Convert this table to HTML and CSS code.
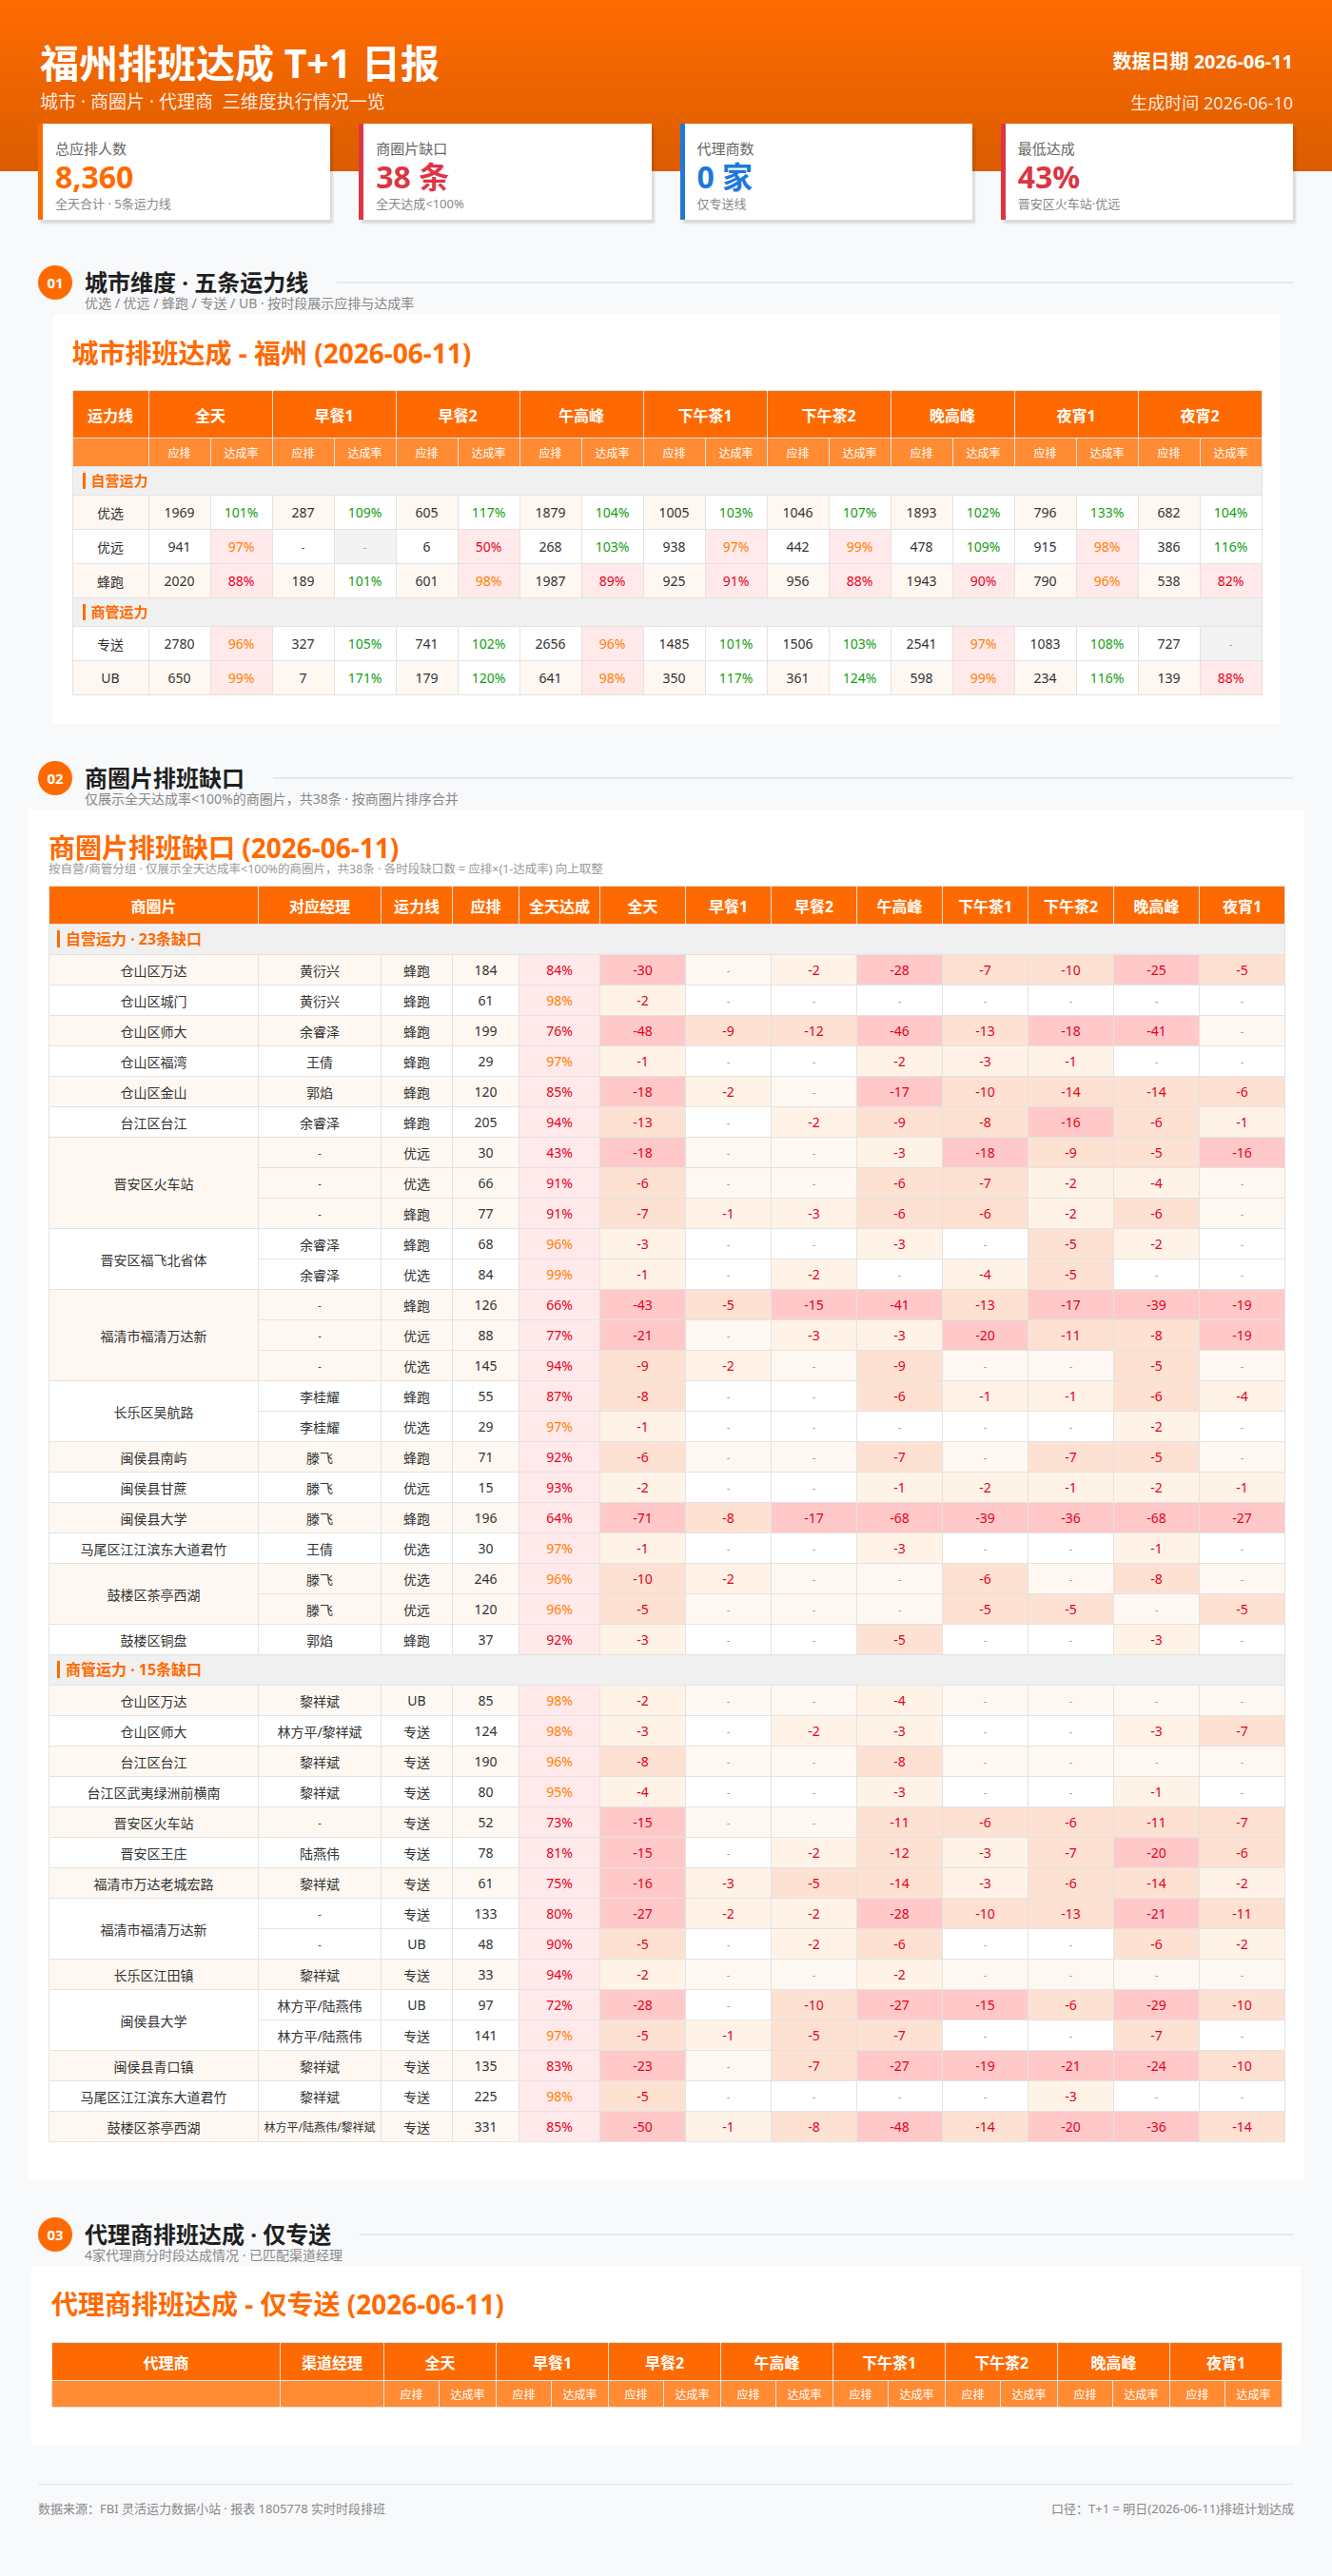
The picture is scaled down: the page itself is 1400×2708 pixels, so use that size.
FILE: index.html
```html
<!DOCTYPE html>
<html lang="zh-CN">
<head>
<meta charset="utf-8">
<title>福州排班达成 T+1 日报</title>
<link rel="stylesheet" href="styles.css">
</head>
<body>
<header class="hero">
  <div class="hero-left">
    <h1>福州排班达成 T+1 日报</h1>
    <div class="hero-sub">城市 · 商圈片 · 代理商&nbsp; 三维度执行情况一览</div>
  </div>
  <div class="hero-right">
    <div class="hero-date">数据日期 2026-06-11</div>
    <div class="hero-gen">生成时间 2026-06-10</div>
  </div>
</header>

<section class="kpis">
  <div class="kpi kpi-orange">
    <div class="kpi-label">总应排人数</div>
    <div class="kpi-value">8,360</div>
    <div class="kpi-sub">全天合计 · 5条运力线</div>
  </div>
  <div class="kpi kpi-red">
    <div class="kpi-label">商圈片缺口</div>
    <div class="kpi-value">38 条</div>
    <div class="kpi-sub">全天达成&lt;100%</div>
  </div>
  <div class="kpi kpi-blue">
    <div class="kpi-label">代理商数</div>
    <div class="kpi-value">0 家</div>
    <div class="kpi-sub">仅专送线</div>
  </div>
  <div class="kpi kpi-red">
    <div class="kpi-label">最低达成</div>
    <div class="kpi-value">43%</div>
    <div class="kpi-sub">晋安区火车站·优远</div>
  </div>
</section>

<div class="sec-head sec-1">
  <span class="num">01</span>
  <h3 class="sec-title">城市维度 · 五条运力线</h3>
  <span class="sec-line"></span>
</div>
<div class="sec-sub">优选 / 优远 / 蜂跑 / 专送 / UB · 按时段展示应排与达成率</div>

<div class="panel p1">
  <h2>城市排班达成 - 福州 (2026-06-11)</h2>
  <table class="t1">
    <colgroup><col class="c-line"><col span="18" class="c-n"></colgroup>
    <thead>
      <tr class="h1"><th>运力线</th><th colspan="2">全天</th><th colspan="2">早餐1</th><th colspan="2">早餐2</th><th colspan="2">午高峰</th><th colspan="2">下午茶1</th><th colspan="2">下午茶2</th><th colspan="2">晚高峰</th><th colspan="2">夜宵1</th><th colspan="2">夜宵2</th></tr>
      <tr class="h2"><th></th><th>应排</th><th>达成率</th><th>应排</th><th>达成率</th><th>应排</th><th>达成率</th><th>应排</th><th>达成率</th><th>应排</th><th>达成率</th><th>应排</th><th>达成率</th><th>应排</th><th>达成率</th><th>应排</th><th>达成率</th><th>应排</th><th>达成率</th></tr>
    </thead>
    <tbody>
      <tr class="grp"><td colspan="19"><span class="grp-label">自营运力</span></td></tr>
      <tr class="z"><td>优选</td><td>1969</td><td class="ok">101%</td><td>287</td><td class="ok">109%</td><td>605</td><td class="ok">117%</td><td>1879</td><td class="ok">104%</td><td>1005</td><td class="ok">103%</td><td>1046</td><td class="ok">107%</td><td>1893</td><td class="ok">102%</td><td>796</td><td class="ok">133%</td><td>682</td><td class="ok">104%</td></tr>
      <tr><td>优远</td><td>941</td><td class="warn">97%</td><td class="d">-</td><td class="na">-</td><td>6</td><td class="bad">50%</td><td>268</td><td class="ok">103%</td><td>938</td><td class="warn">97%</td><td>442</td><td class="warn">99%</td><td>478</td><td class="ok">109%</td><td>915</td><td class="warn">98%</td><td>386</td><td class="ok">116%</td></tr>
      <tr class="z"><td>蜂跑</td><td>2020</td><td class="bad">88%</td><td>189</td><td class="ok">101%</td><td>601</td><td class="warn">98%</td><td>1987</td><td class="bad">89%</td><td>925</td><td class="bad">91%</td><td>956</td><td class="bad">88%</td><td>1943</td><td class="bad">90%</td><td>790</td><td class="warn">96%</td><td>538</td><td class="bad">82%</td></tr>
      <tr class="grp"><td colspan="19"><span class="grp-label">商管运力</span></td></tr>
      <tr><td>专送</td><td>2780</td><td class="warn">96%</td><td>327</td><td class="ok">105%</td><td>741</td><td class="ok">102%</td><td>2656</td><td class="warn">96%</td><td>1485</td><td class="ok">101%</td><td>1506</td><td class="ok">103%</td><td>2541</td><td class="warn">97%</td><td>1083</td><td class="ok">108%</td><td>727</td><td class="na">-</td></tr>
      <tr class="z"><td>UB</td><td>650</td><td class="warn">99%</td><td>7</td><td class="ok">171%</td><td>179</td><td class="ok">120%</td><td>641</td><td class="warn">98%</td><td>350</td><td class="ok">117%</td><td>361</td><td class="ok">124%</td><td>598</td><td class="warn">99%</td><td>234</td><td class="ok">116%</td><td>139</td><td class="bad">88%</td></tr>
    </tbody>
  </table>
</div>

<div class="sec-head sec-2">
  <span class="num">02</span>
  <h3 class="sec-title">商圈片排班缺口</h3>
  <span class="sec-line"></span>
</div>
<div class="sec-sub">仅展示全天达成率&lt;100%的商圈片，共38条 · 按商圈片排序合并</div>

<div class="panel p2">
  <h2>商圈片排班缺口 (2026-06-11)</h2>
  <div class="panel-note">按自营/商管分组 · 仅展示全天达成率&lt;100%的商圈片，共38条 · 各时段缺口数 = 应排×(1-达成率) 向上取整</div>
  <table class="t2">
    <colgroup><col class="c-area"><col class="c-mgr"><col class="c-ln"><col class="c-plan"><col class="c-rate"><col span="8" class="c-gap"></colgroup>
    <thead>
      <tr><th>商圈片</th><th>对应经理</th><th>运力线</th><th>应排</th><th>全天达成</th><th>全天</th><th>早餐1</th><th>早餐2</th><th>午高峰</th><th>下午茶1</th><th>下午茶2</th><th>晚高峰</th><th>夜宵1</th></tr>
    </thead>
    <tbody>
      <tr class="grp"><td colspan="13"><span class="grp-label">自营运力 · 23条缺口</span></td></tr>
      <tr class="z"><td>仓山区万达</td><td>黄衍兴</td><td>蜂跑</td><td>184</td><td class="r bad">84%</td><td class="g3">-30</td><td class="e">-</td><td class="g1">-2</td><td class="g3">-28</td><td class="g2">-7</td><td class="g2">-10</td><td class="g3">-25</td><td class="g2">-5</td></tr>
      <tr><td>仓山区城门</td><td>黄衍兴</td><td>蜂跑</td><td>61</td><td class="r warn">98%</td><td class="g1">-2</td><td class="e">-</td><td class="e">-</td><td class="e">-</td><td class="e">-</td><td class="e">-</td><td class="e">-</td><td class="e">-</td></tr>
      <tr class="z"><td>仓山区师大</td><td>余睿泽</td><td>蜂跑</td><td>199</td><td class="r bad">76%</td><td class="g3">-48</td><td class="g2">-9</td><td class="g2">-12</td><td class="g3">-46</td><td class="g2">-13</td><td class="g3">-18</td><td class="g3">-41</td><td class="e">-</td></tr>
      <tr><td>仓山区福湾</td><td>王倩</td><td>蜂跑</td><td>29</td><td class="r warn">97%</td><td class="g1">-1</td><td class="e">-</td><td class="e">-</td><td class="g1">-2</td><td class="g1">-3</td><td class="g1">-1</td><td class="e">-</td><td class="e">-</td></tr>
      <tr class="z"><td>仓山区金山</td><td>郭焰</td><td>蜂跑</td><td>120</td><td class="r bad">85%</td><td class="g3">-18</td><td class="g1">-2</td><td class="e">-</td><td class="g3">-17</td><td class="g2">-10</td><td class="g2">-14</td><td class="g2">-14</td><td class="g2">-6</td></tr>
      <tr><td>台江区台江</td><td>余睿泽</td><td>蜂跑</td><td>205</td><td class="r bad">94%</td><td class="g2">-13</td><td class="e">-</td><td class="g1">-2</td><td class="g2">-9</td><td class="g2">-8</td><td class="g3">-16</td><td class="g2">-6</td><td class="g1">-1</td></tr>
      <tr class="z"><td rowspan="3">晋安区火车站</td><td class="d">-</td><td>优远</td><td>30</td><td class="r bad">43%</td><td class="g3">-18</td><td class="e">-</td><td class="e">-</td><td class="g1">-3</td><td class="g3">-18</td><td class="g2">-9</td><td class="g2">-5</td><td class="g3">-16</td></tr>
      <tr class="z"><td class="d">-</td><td>优选</td><td>66</td><td class="r bad">91%</td><td class="g2">-6</td><td class="e">-</td><td class="e">-</td><td class="g2">-6</td><td class="g2">-7</td><td class="g1">-2</td><td class="g1">-4</td><td class="e">-</td></tr>
      <tr class="z"><td class="d">-</td><td>蜂跑</td><td>77</td><td class="r bad">91%</td><td class="g2">-7</td><td class="g1">-1</td><td class="g1">-3</td><td class="g2">-6</td><td class="g2">-6</td><td class="g1">-2</td><td class="g2">-6</td><td class="e">-</td></tr>
      <tr><td rowspan="2">晋安区福飞北省体</td><td>余睿泽</td><td>蜂跑</td><td>68</td><td class="r warn">96%</td><td class="g1">-3</td><td class="e">-</td><td class="e">-</td><td class="g1">-3</td><td class="e">-</td><td class="g2">-5</td><td class="g1">-2</td><td class="e">-</td></tr>
      <tr><td>余睿泽</td><td>优选</td><td>84</td><td class="r warn">99%</td><td class="g1">-1</td><td class="e">-</td><td class="g1">-2</td><td class="e">-</td><td class="g1">-4</td><td class="g2">-5</td><td class="e">-</td><td class="e">-</td></tr>
      <tr class="z"><td rowspan="3">福清市福清万达新</td><td class="d">-</td><td>蜂跑</td><td>126</td><td class="r bad">66%</td><td class="g3">-43</td><td class="g2">-5</td><td class="g3">-15</td><td class="g3">-41</td><td class="g2">-13</td><td class="g3">-17</td><td class="g3">-39</td><td class="g3">-19</td></tr>
      <tr class="z"><td class="d">-</td><td>优远</td><td>88</td><td class="r bad">77%</td><td class="g3">-21</td><td class="e">-</td><td class="g1">-3</td><td class="g1">-3</td><td class="g3">-20</td><td class="g2">-11</td><td class="g2">-8</td><td class="g3">-19</td></tr>
      <tr class="z"><td class="d">-</td><td>优选</td><td>145</td><td class="r bad">94%</td><td class="g2">-9</td><td class="g1">-2</td><td class="e">-</td><td class="g2">-9</td><td class="e">-</td><td class="e">-</td><td class="g2">-5</td><td class="e">-</td></tr>
      <tr><td rowspan="2">长乐区吴航路</td><td>李桂耀</td><td>蜂跑</td><td>55</td><td class="r bad">87%</td><td class="g2">-8</td><td class="e">-</td><td class="e">-</td><td class="g2">-6</td><td class="g1">-1</td><td class="g1">-1</td><td class="g2">-6</td><td class="g1">-4</td></tr>
      <tr><td>李桂耀</td><td>优选</td><td>29</td><td class="r warn">97%</td><td class="g1">-1</td><td class="e">-</td><td class="e">-</td><td class="e">-</td><td class="e">-</td><td class="e">-</td><td class="g1">-2</td><td class="e">-</td></tr>
      <tr class="z"><td>闽侯县南屿</td><td>滕飞</td><td>蜂跑</td><td>71</td><td class="r bad">92%</td><td class="g2">-6</td><td class="e">-</td><td class="e">-</td><td class="g2">-7</td><td class="e">-</td><td class="g2">-7</td><td class="g2">-5</td><td class="e">-</td></tr>
      <tr><td>闽侯县甘蔗</td><td>滕飞</td><td>优远</td><td>15</td><td class="r bad">93%</td><td class="g1">-2</td><td class="e">-</td><td class="e">-</td><td class="g1">-1</td><td class="g1">-2</td><td class="g1">-1</td><td class="g1">-2</td><td class="g1">-1</td></tr>
      <tr class="z"><td>闽侯县大学</td><td>滕飞</td><td>蜂跑</td><td>196</td><td class="r bad">64%</td><td class="g3">-71</td><td class="g2">-8</td><td class="g3">-17</td><td class="g3">-68</td><td class="g3">-39</td><td class="g3">-36</td><td class="g3">-68</td><td class="g3">-27</td></tr>
      <tr><td>马尾区江江滨东大道君竹</td><td>王倩</td><td>优选</td><td>30</td><td class="r warn">97%</td><td class="g1">-1</td><td class="e">-</td><td class="e">-</td><td class="g1">-3</td><td class="e">-</td><td class="e">-</td><td class="g1">-1</td><td class="e">-</td></tr>
      <tr class="z"><td rowspan="2">鼓楼区茶亭西湖</td><td>滕飞</td><td>优选</td><td>246</td><td class="r warn">96%</td><td class="g2">-10</td><td class="g1">-2</td><td class="e">-</td><td class="e">-</td><td class="g2">-6</td><td class="e">-</td><td class="g2">-8</td><td class="e">-</td></tr>
      <tr class="z"><td>滕飞</td><td>优远</td><td>120</td><td class="r warn">96%</td><td class="g2">-5</td><td class="e">-</td><td class="e">-</td><td class="e">-</td><td class="g2">-5</td><td class="g2">-5</td><td class="e">-</td><td class="g2">-5</td></tr>
      <tr><td>鼓楼区铜盘</td><td>郭焰</td><td>蜂跑</td><td>37</td><td class="r bad">92%</td><td class="g1">-3</td><td class="e">-</td><td class="e">-</td><td class="g2">-5</td><td class="e">-</td><td class="e">-</td><td class="g1">-3</td><td class="e">-</td></tr>

      <tr class="grp"><td colspan="13"><span class="grp-label">商管运力 · 15条缺口</span></td></tr>
      <tr class="z"><td>仓山区万达</td><td>黎祥斌</td><td>UB</td><td>85</td><td class="r warn">98%</td><td class="g1">-2</td><td class="e">-</td><td class="e">-</td><td class="g1">-4</td><td class="e">-</td><td class="e">-</td><td class="e">-</td><td class="e">-</td></tr>
      <tr><td>仓山区师大</td><td>林方平/黎祥斌</td><td>专送</td><td>124</td><td class="r warn">98%</td><td class="g1">-3</td><td class="e">-</td><td class="g1">-2</td><td class="g1">-3</td><td class="e">-</td><td class="e">-</td><td class="g1">-3</td><td class="g2">-7</td></tr>
      <tr class="z"><td>台江区台江</td><td>黎祥斌</td><td>专送</td><td>190</td><td class="r warn">96%</td><td class="g2">-8</td><td class="e">-</td><td class="e">-</td><td class="g2">-8</td><td class="e">-</td><td class="e">-</td><td class="e">-</td><td class="e">-</td></tr>
      <tr><td>台江区武夷绿洲前横南</td><td>黎祥斌</td><td>专送</td><td>80</td><td class="r warn">95%</td><td class="g1">-4</td><td class="e">-</td><td class="e">-</td><td class="g1">-3</td><td class="e">-</td><td class="e">-</td><td class="g1">-1</td><td class="e">-</td></tr>
      <tr class="z"><td>晋安区火车站</td><td class="d">-</td><td>专送</td><td>52</td><td class="r bad">73%</td><td class="g3">-15</td><td class="e">-</td><td class="e">-</td><td class="g2">-11</td><td class="g2">-6</td><td class="g2">-6</td><td class="g2">-11</td><td class="g2">-7</td></tr>
      <tr><td>晋安区王庄</td><td>陆燕伟</td><td>专送</td><td>78</td><td class="r bad">81%</td><td class="g3">-15</td><td class="e">-</td><td class="g1">-2</td><td class="g2">-12</td><td class="g1">-3</td><td class="g2">-7</td><td class="g3">-20</td><td class="g2">-6</td></tr>
      <tr class="z"><td>福清市万达老城宏路</td><td>黎祥斌</td><td>专送</td><td>61</td><td class="r bad">75%</td><td class="g3">-16</td><td class="g1">-3</td><td class="g2">-5</td><td class="g2">-14</td><td class="g1">-3</td><td class="g2">-6</td><td class="g2">-14</td><td class="g1">-2</td></tr>
      <tr><td rowspan="2">福清市福清万达新</td><td class="d">-</td><td>专送</td><td>133</td><td class="r bad">80%</td><td class="g3">-27</td><td class="g1">-2</td><td class="g1">-2</td><td class="g3">-28</td><td class="g2">-10</td><td class="g2">-13</td><td class="g3">-21</td><td class="g2">-11</td></tr>
      <tr><td class="d">-</td><td>UB</td><td>48</td><td class="r bad">90%</td><td class="g2">-5</td><td class="e">-</td><td class="g1">-2</td><td class="g2">-6</td><td class="e">-</td><td class="e">-</td><td class="g2">-6</td><td class="g1">-2</td></tr>
      <tr class="z"><td>长乐区江田镇</td><td>黎祥斌</td><td>专送</td><td>33</td><td class="r bad">94%</td><td class="g1">-2</td><td class="e">-</td><td class="e">-</td><td class="g1">-2</td><td class="e">-</td><td class="e">-</td><td class="e">-</td><td class="e">-</td></tr>
      <tr><td rowspan="2">闽侯县大学</td><td>林方平/陆燕伟</td><td>UB</td><td>97</td><td class="r bad">72%</td><td class="g3">-28</td><td class="e">-</td><td class="g2">-10</td><td class="g3">-27</td><td class="g3">-15</td><td class="g2">-6</td><td class="g3">-29</td><td class="g2">-10</td></tr>
      <tr><td>林方平/陆燕伟</td><td>专送</td><td>141</td><td class="r warn">97%</td><td class="g2">-5</td><td class="g1">-1</td><td class="g2">-5</td><td class="g2">-7</td><td class="e">-</td><td class="e">-</td><td class="g2">-7</td><td class="e">-</td></tr>
      <tr class="z"><td>闽侯县青口镇</td><td>黎祥斌</td><td>专送</td><td>135</td><td class="r bad">83%</td><td class="g3">-23</td><td class="e">-</td><td class="g2">-7</td><td class="g3">-27</td><td class="g3">-19</td><td class="g3">-21</td><td class="g3">-24</td><td class="g2">-10</td></tr>
      <tr><td>马尾区江江滨东大道君竹</td><td>黎祥斌</td><td>专送</td><td>225</td><td class="r warn">98%</td><td class="g2">-5</td><td class="e">-</td><td class="e">-</td><td class="e">-</td><td class="e">-</td><td class="g1">-3</td><td class="e">-</td><td class="e">-</td></tr>
      <tr class="z"><td>鼓楼区茶亭西湖</td><td class="small">林方平/陆燕伟/黎祥斌</td><td>专送</td><td>331</td><td class="r bad">85%</td><td class="g3">-50</td><td class="g1">-1</td><td class="g2">-8</td><td class="g3">-48</td><td class="g2">-14</td><td class="g3">-20</td><td class="g3">-36</td><td class="g2">-14</td></tr>
    </tbody>
  </table>
</div>

<div class="sec-head sec-3">
  <span class="num">03</span>
  <h3 class="sec-title">代理商排班达成 · 仅专送</h3>
  <span class="sec-line"></span>
</div>
<div class="sec-sub">4家代理商分时段达成情况 · 已匹配渠道经理</div>

<div class="panel p3">
  <h2>代理商排班达成 - 仅专送 (2026-06-11)</h2>
  <table class="t3">
    <colgroup><col class="c-agent"><col class="c-chan"><col class="c-a"><col class="c-b"><col class="c-a"><col class="c-b"><col class="c-a"><col class="c-b"><col class="c-a"><col class="c-b"><col class="c-a"><col class="c-b"><col class="c-a"><col class="c-b"><col class="c-a"><col class="c-b"><col class="c-a"><col class="c-b"></colgroup>
    <thead>
      <tr class="h1"><th>代理商</th><th>渠道经理</th><th colspan="2">全天</th><th colspan="2">早餐1</th><th colspan="2">早餐2</th><th colspan="2">午高峰</th><th colspan="2">下午茶1</th><th colspan="2">下午茶2</th><th colspan="2">晚高峰</th><th colspan="2">夜宵1</th></tr>
      <tr class="h2"><th></th><th></th><th>应排</th><th>达成率</th><th>应排</th><th>达成率</th><th>应排</th><th>达成率</th><th>应排</th><th>达成率</th><th>应排</th><th>达成率</th><th>应排</th><th>达成率</th><th>应排</th><th>达成率</th><th>应排</th><th>达成率</th></tr>
    </thead>
  </table>
</div>

<footer class="foot">
  <span>数据来源：FBI 灵活运力数据小站 · 报表 1805778 实时时段排班</span>
  <span>口径：T+1 = 明日(2026-06-11)排班计划达成</span>
</footer>
</body>
</html>
```

FILE: styles.css
```css
* { box-sizing: border-box; }

body {
  margin: 0;
  background: #f8f9fb;
  font-family: "Noto Sans", "Noto Sans CJK SC", sans-serif;
  color: #333;
}

/* ---------- hero ---------- */
.hero {
  height: 180px;
  padding: 42px 41px 0 42px;
  background: linear-gradient(180deg, #ff6b00 0%, #db5d00 100%);
  color: #fff;
  display: flex;
  justify-content: space-between;
}
.hero h1 {
  margin: 0;
  font-size: 41px;
  line-height: 48px;
  font-weight: 700;
}
.hero-sub {
  margin-top: 4px;
  font-size: 19px;
  line-height: 26px;
  color: rgba(255, 255, 255, 0.88);
}
.hero-right { text-align: right; }
.hero-date {
  margin-top: 9px;
  font-size: 20px;
  line-height: 28px;
  font-weight: 700;
}
.hero-gen {
  margin-top: 17px;
  font-size: 18px;
  line-height: 24px;
  color: rgba(255, 255, 255, 0.85);
}

/* ---------- kpis ---------- */
.kpis {
  display: grid;
  grid-template-columns: repeat(4, 1fr);
  gap: 30px;
  margin: -50px 41px 0 40px;
}
.kpi {
  height: 101px;
  background: #fff;
  border-left: 5px solid #ff6a00;
  padding: 16px 12px 8px 13px;
  box-shadow: 3px 4px 2px rgba(0, 0, 0, 0.12);
}
.kpi-label { font-size: 15px; line-height: 20px; color: #666; }
.kpi-value { margin-top: 2px; font-size: 32px; line-height: 36px; font-weight: 700; }
.kpi-sub { margin-top: 1px; font-size: 13px; line-height: 18px; color: #888; }
.kpi-orange { border-left-color: #ff6a00; }
.kpi-orange .kpi-value { color: #ff6a00; }
.kpi-red { border-left-color: #dc3545; }
.kpi-red .kpi-value { color: #dc3545; }
.kpi-blue { border-left-color: #1e78dc; }
.kpi-blue .kpi-value { color: #1e78dc; }

/* ---------- section heads ---------- */
.sec-head {
  display: flex;
  align-items: center;
  height: 36px;
  margin: 0 41px 0 40px;
}
.sec-1 { margin-top: 48px; }
.sec-2 { margin-top: 39px; }
.sec-3 { margin-top: 40px; }
.num {
  flex: none;
  width: 36px;
  height: 36px;
  border-radius: 50%;
  background: #ff6a00;
  color: #fff;
  font-size: 15px;
  font-weight: 700;
  display: flex;
  align-items: center;
  justify-content: center;
}
.sec-title {
  margin: 0 0 0 13px;
  font-size: 24px;
  line-height: 30px;
  font-weight: 700;
  color: #1f1f1f;
}
.sec-line {
  flex: 1;
  height: 2px;
  margin-left: 30px;
  background: #e8e9ed;
}
.sec-sub {
  margin: -4px 0 0 89px;
  font-size: 14px;
  line-height: 16px;
  color: #888;
}

/* ---------- panels ---------- */
.panel {
  background: #fff;
  margin: 3px auto 0;
}
.panel h2 {
  margin: 0;
  font-size: 28px;
  line-height: 34px;
  font-weight: 700;
  color: #ff6a00;
}
.p1 { width: 1289px; padding: 24px 19px 30px 20px; }
.p1 h2 { margin-bottom: 22px; }
.p2 { width: 1340px; padding: 24px 20px 39px 21px; }
.p2 h2 { line-height: 32px; }
.p3 { width: 1334px; padding: 23px 20px 40px 21px; }
.p3 h2 { margin-bottom: 23px; }
.panel-note {
  margin: 0 0 10px;
  font-size: 12.5px;
  line-height: 14px;
  color: #999;
}

/* ---------- tables common ---------- */
table {
  width: 100%;
  border-collapse: collapse;
  table-layout: fixed;
}
th, td {
  border: 1px solid #e3e3e3;
  text-align: center;
  padding: 0 2px;
  white-space: nowrap;
  overflow: hidden;
}
th {
  background: #ff6a00;
  color: #fff;
  font-weight: 700;
  font-size: 16px;
}
.h2 th {
  background: #ff8b33;
  font-size: 12px;
  font-weight: 400;
}
td { font-size: 14px; color: #333; }
tr.z { background: #fff8f2; }
tr.grp td {
  background: #f0f0f0;
  text-align: left;
  padding-left: 10px;
}
.grp-label {
  display: inline-block;
  border-left: 3px solid #ff6a00;
  padding-left: 6px;
  line-height: 17px;
  font-size: 15px;
  font-weight: 700;
  color: #ff6a00;
}

/* rates */
.ok { background: #fff; color: #12a012; }
.warn { background: #ffe9ea; color: #ff7f00; }
.bad { background: #ffe9ea; color: #e6001a; }
.na { background: #f3f3f3; color: #999; font-size: 11px; }
.d { font-size: 11px; color: #333; }

/* ---------- table 1 ---------- */
.t1 .c-line { width: 80px; }
.t1 .c-n { width: 65px; }
.t1 .h1 th { height: 50px; font-size: 16px; }
.t1 .h2 th { height: 30px; }
.t1 tr.grp td { height: 30px; }
.t1 tbody tr:not(.grp) td { height: 36px; }

/* ---------- table 2 ---------- */
.t2 .c-area { width: 220px; }
.t2 .c-mgr { width: 129px; }
.t2 .c-ln { width: 75px; }
.t2 .c-plan { width: 70px; }
.t2 .c-rate { width: 85px; }
.t2 .c-gap { width: 90px; }
.t2 th { height: 40px; }
.t2 td { height: 32px; }
.t2 tr.grp td { padding-left: 8px; }
.t2 .grp-label { font-size: 16px; line-height: 18px; }
.t2 .r { background: #ffe9ea; }
.t2 .g1, .t2 .g2, .t2 .g3 { color: #e6001a; }
.t2 .g1 { background: #fff3e8; }
.t2 .g2 { background: #fde1d3; }
.t2 .g3 { background: #ffc9c9; }
.t2 .e { color: #999; font-size: 11px; }
.t2 .small { font-size: 12px; padding: 0; }

/* ---------- table 3 ---------- */
.t3 .c-agent { width: 240px; }
.t3 .c-chan { width: 109px; }
.t3 .c-a { width: 58px; }
.t3 .c-b { width: 60px; }
.t3 .h1 th { height: 40px; }
.t3 .h2 th { height: 28px; }

/* ---------- footer ---------- */
.foot {
  margin: 40px 40px 0;
  border-top: 1px solid #e5e6eb;
  padding: 16px 0 64px;
  display: flex;
  justify-content: space-between;
  font-size: 13px;
  line-height: 18px;
  color: #888;
}
```
